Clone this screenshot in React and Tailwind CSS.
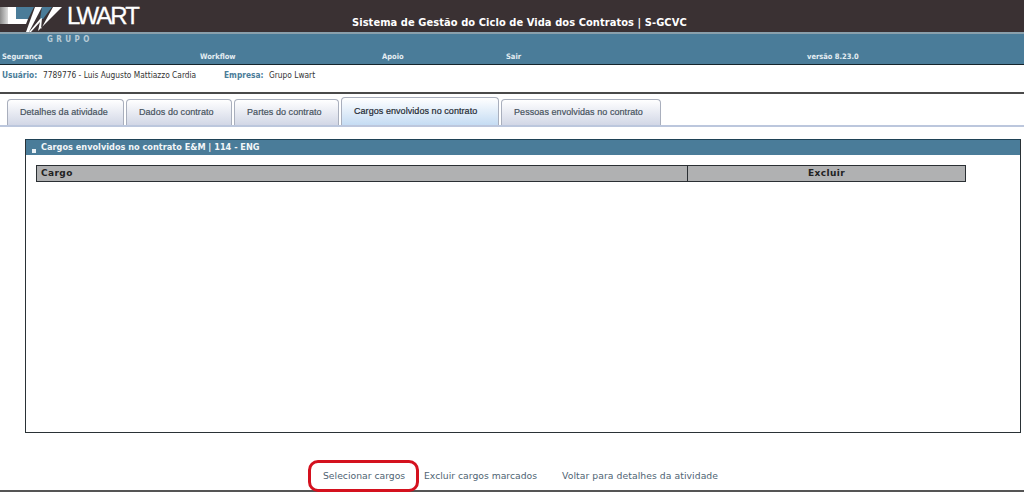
const tabs = [
  { label: 'Detalhes da atividade', width: 'w-[117px]' },
  { label: 'Dados do contrato', width: 'w-[106px]' },
  { label: 'Partes do contrato', width: 'w-[105px]' },
  { label: 'Cargos envolvidos no contrato', width: 'w-[158px]', active: true },
  { label: 'Pessoas envolvidas no contrato', width: 'w-[160px]' },
];

function LogoMark() {
  return (
    <svg width="66" height="32" viewBox="0 0 66 32" className="shrink-0">
      <defs>
        <linearGradient id="fade" x1="0" x2="1" y1="0" y2="0">
          <stop offset="0" stopColor="#8a8a8a" />
          <stop offset="1" stopColor="#dcdcdc" />
        </linearGradient>
      </defs>
      <rect x="0" y="7" width="8" height="17" fill="url(#fade)" />
      <path d="M16 7h18l-6 12H16z" fill="#4a7c99" />
      <path d="M8 7h8v12h12l-2 5H8z" fill="#fff" />
      <path d="M35 7h7L29 32h-3z" fill="#fff" />
      <path d="M42 7h10l-9 12h-3z" fill="#4a7c99" />
      <path d="M29 32l11-13 2-1-1 11L53 7h9L38 31l2-9-9 10z" fill="#fff" />
    </svg>
  );
}

function Header() {
  return (
    <div className="h-[32px] bg-[#3a3133] flex relative">
      <LogoMark />
      <span className="font-['Liberation_Sans',sans-serif] text-[24px] leading-[24px] text-white mt-[4px] ml-[1px] tracking-[-2px] [-webkit-text-stroke:0.3px_#fff]">
        LWART
      </span>
      <h1 className="absolute left-[352px] top-[15px] font-['DejaVu_Sans_Condensed','DejaVu_Sans',sans-serif] font-bold text-[11px] tracking-[0.07px] leading-[16px] text-white whitespace-nowrap">
        Sistema de Gestão do Ciclo de Vida dos Contratos | S-GCVC
      </h1>
    </div>
  );
}

function MenuBar() {
  return (
    <div className="h-[33px] bg-[#4a7c99] border-t-2 border-t-[#8aa0ac] border-b border-b-[#16242c] font-['DejaVu_Sans_Condensed','DejaVu_Sans',sans-serif]">
      <div className="pl-[47px] pt-[1px] text-[8px] leading-[10px] font-bold tracking-[3.4px] text-[#b9cbd6]">GRUPO</div>
      <div className="flex mt-[6px] text-[7.5px] leading-[12px] font-bold text-[#e4edf2]">
        <span className="ml-[2px] w-[198px]">Segurança</span>
        <span className="w-[182px]">Workflow</span>
        <span className="w-[124px]">Apoio</span>
        <span className="w-[301px]">Sair</span>
        <span>versão 8.23.0</span>
      </div>
    </div>
  );
}

function UserBar() {
  return (
    <div className="h-[29px] border-b-2 border-b-[#4a4a4a] flex pl-[2px] pt-[4px] font-['DejaVu_Sans_Condensed','DejaVu_Sans',sans-serif] text-[8.3px] leading-[12px] text-[#333]">
      <span className="font-bold text-[#4a7c99] w-[41px]">Usuário:</span>
      <span className="w-[181px]">7789776 - Luis Augusto Mattiazzo Cardia</span>
      <span className="font-bold text-[#4a7c99] w-[45px]">Empresa:</span>
      <span>Grupo Lwart</span>
    </div>
  );
}

function Tabs() {
  return (
    <div className="h-[33px] flex items-end gap-[2px] pl-[7px] border-b-2 border-b-[#bcc7dd] font-['Liberation_Sans',sans-serif] text-[9px] tracking-[0.06px] [-webkit-text-stroke:0.2px]">
      {tabs.map((tab) => (
        <div
          key={tab.label}
          className={`${tab.width} flex items-center pl-[12px] rounded-t-[4px] border border-b-0 border-[#a9afbd] ${
            tab.active
              ? 'h-[28px] bg-gradient-to-b from-white to-[#c5dcf3] text-[#1f2a33]'
              : 'h-[26px] bg-gradient-to-b from-white to-[#d2d7e6] text-[#47535e]'
          }`}
        >
          {tab.label}
        </div>
      ))}
    </div>
  );
}

function Panel() {
  return (
    <section className="ml-[25px] mr-[3px] mt-[12px] h-[294px] border border-[#2a3236] border-t-[#1f4256]">
      <div className="h-[15px] bg-[#4a7c99] flex items-center relative pl-[15px] font-['DejaVu_Sans_Condensed','DejaVu_Sans',sans-serif] text-[9.1px] font-bold text-[#f2f6f8]">
        <span className="absolute left-[6px] top-[9px] w-[4px] h-[4px] bg-[#e8f0f5]" />
        Cargos envolvidos no contrato E&amp;M | 114 - ENG
      </div>
      <table className="ml-[10px] mt-[10px] w-[930px] border-collapse table-fixed font-['DejaVu_Sans',sans-serif] text-[9px] font-bold tracking-[0.4px] text-[#222]">
        <thead>
          <tr className="h-[16px] bg-[#b0b1b2]">
            <th className="w-[651px] border border-[#2a2f33] text-left pl-[4px] font-bold">Cargo</th>
            <th className="border border-[#2a2f33] text-center font-bold">Excluir</th>
          </tr>
        </thead>
      </table>
    </section>
  );
}

function Actions() {
  return (
    <div className="relative h-[59px] border-b-2 border-b-[#555] font-['DejaVu_Sans',sans-serif] text-[9.25px] text-[#4f6473]">
      <div className="flex pl-[323px] pt-[36px] leading-[14px]">
        <a className="w-[101px]">Selecionar cargos</a>
        <a className="w-[138px]">Excluir cargos marcados</a>
        <a className="tracking-[0.06px]">Voltar para detalhes da atividade</a>
      </div>
      <span className="absolute left-[308px] top-[27px] w-[111px] h-[32px] border-[3px] border-[#d4111e] rounded-[10px]" />
    </div>
  );
}

export default function App() {
  return (
    <div className="w-[1024px] h-[494px] bg-white overflow-hidden">
      <Header />
      <MenuBar />
      <UserBar />
      <Tabs />
      <Panel />
      <Actions />
    </div>
  );
}
